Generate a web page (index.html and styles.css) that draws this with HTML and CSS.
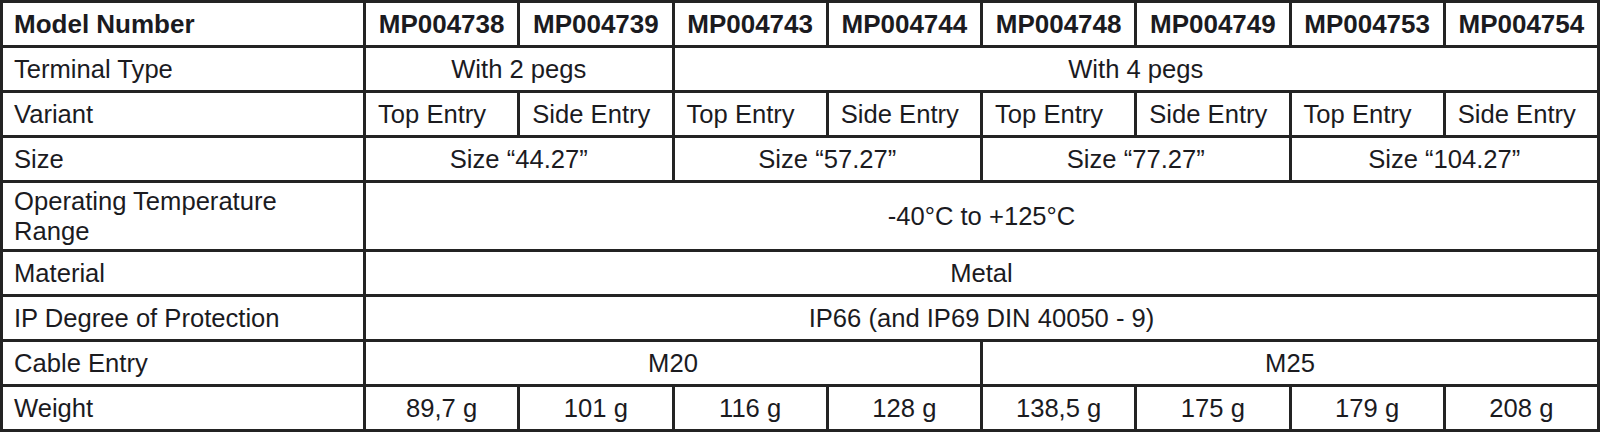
FILE: index.html
```html
<!DOCTYPE html>
<html lang="en">
<head>
<meta charset="utf-8">
<title>Model specifications</title>
<link rel="stylesheet" href="styles.css">
</head>
<body>
<div class="spec">
  <div class="cell label bold">Model Number</div>
  <div class="cell center bold">MP004738</div>
  <div class="cell center bold">MP004739</div>
  <div class="cell center bold">MP004743</div>
  <div class="cell center bold">MP004744</div>
  <div class="cell center bold">MP004748</div>
  <div class="cell center bold">MP004749</div>
  <div class="cell center bold">MP004753</div>
  <div class="cell center bold">MP004754</div>

  <div class="cell label">Terminal Type</div>
  <div class="cell center span2">With 2 pegs</div>
  <div class="cell center span6">With 4 pegs</div>

  <div class="cell label">Variant</div>
  <div class="cell left">Top Entry</div>
  <div class="cell left">Side Entry</div>
  <div class="cell left">Top Entry</div>
  <div class="cell left">Side Entry</div>
  <div class="cell left">Top Entry</div>
  <div class="cell left">Side Entry</div>
  <div class="cell left">Top Entry</div>
  <div class="cell left">Side Entry</div>

  <div class="cell label">Size</div>
  <div class="cell center span2">Size “44.27”</div>
  <div class="cell center span2">Size “57.27”</div>
  <div class="cell center span2">Size “77.27”</div>
  <div class="cell center span2">Size “104.27”</div>

  <div class="cell label wrap">Operating Temperature Range</div>
  <div class="cell center span8">-40°C to +125°C</div>

  <div class="cell label">Material</div>
  <div class="cell center span8">Metal</div>

  <div class="cell label">IP Degree of Protection</div>
  <div class="cell center span8">IP66 (and IP69 DIN 40050 - 9)</div>

  <div class="cell label">Cable Entry</div>
  <div class="cell center span4">M20</div>
  <div class="cell center span4">M25</div>

  <div class="cell label">Weight</div>
  <div class="cell center">89,7 g</div>
  <div class="cell center">101 g</div>
  <div class="cell center">116 g</div>
  <div class="cell center">128 g</div>
  <div class="cell center">138,5 g</div>
  <div class="cell center">175 g</div>
  <div class="cell center">179 g</div>
  <div class="cell center">208 g</div>
</div>
</body>
</html>
```

FILE: styles.css
```css
html, body {
  margin: 0;
  padding: 0;
  background: #ffffff;
}

.spec {
  box-sizing: border-box;
  width: 1600px;
  height: 432px;
  display: grid;
  grid-template-columns: 360px repeat(8, 1fr);
  grid-template-rows: 42px 42px 42px 42px 66px 42px 42px 42px 42px;
  gap: 3px;
  padding: 3px;
  background: #232323;
  font-family: "Liberation Sans", Arial, sans-serif;
  font-size: 25.6px;
  color: #1b1b1f;
}

.cell {
  background: #ffffff;
  display: flex;
  align-items: center;
  line-height: 30px;
  overflow: hidden;
}

.label {
  padding: 0 40px 0 11px;
}

.left {
  padding: 0 4px 0 12px;
  white-space: nowrap;
}

.center {
  justify-content: center;
  white-space: nowrap;
}

.bold {
  font-weight: 700;
  font-size: 26px;
}

.span2 { grid-column: span 2; }
.span4 { grid-column: span 4; }
.span6 { grid-column: span 6; }
.span8 { grid-column: span 8; }
```
